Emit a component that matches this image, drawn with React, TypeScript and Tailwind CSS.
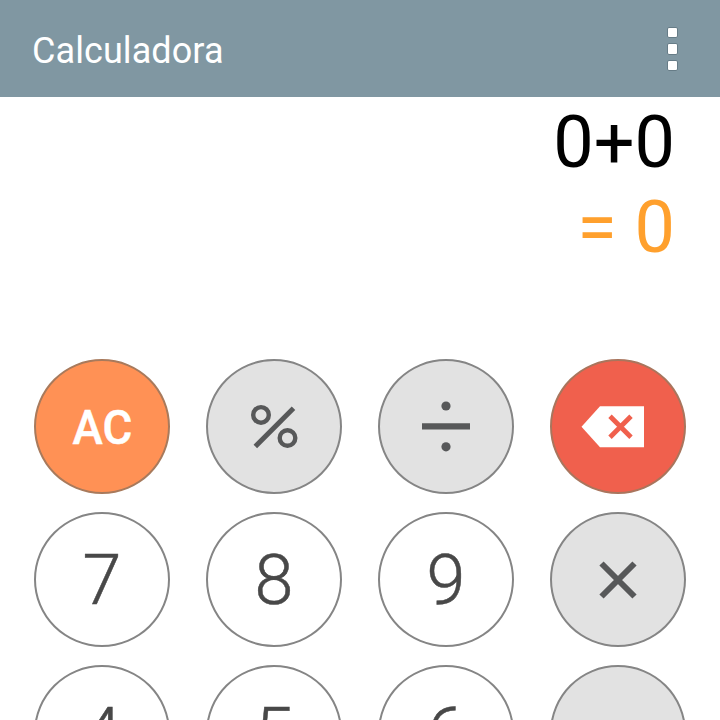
import type { ReactNode } from 'react';

type Tone = 'clear' | 'erase' | 'operator' | 'digit';

const tones: Record<Tone, string> = {
  clear: 'bg-[#ff9155] border-[#a87a5c] text-white',
  erase: 'bg-[#f0604d] border-[#a9755d] text-white',
  operator: 'bg-[#e2e2e2] border-[#858585] text-[#575859]',
  digit: 'bg-white border-[#858585] text-[#484848]',
};

function Key({ tone, label, children }: { tone: Tone; label: string; children?: ReactNode }) {
  return (
    <button
      aria-label={label}
      className={`flex h-[135px] w-[136px] items-center justify-center rounded-[50%] border-2 ${tones[tone]}`}
    >
      {children}
    </button>
  );
}

function Digit({ value }: { value: string }) {
  return (
    <Key tone="digit" label={value}>
      <span className="text-[70px] leading-[70px] font-light [-webkit-text-stroke:0.5px_#484848]">{value}</span>
    </Key>
  );
}

function PercentIcon() {
  return (
    <svg width="52" height="52" viewBox="0 0 52 52" fill="none" stroke="currentColor">
      <circle cx="13" cy="13.9" r="7.8" strokeWidth="4.4" />
      <circle cx="39.5" cy="37" r="7.8" strokeWidth="4.4" />
      <path d="M7.3 45.4 45.5 7.2" strokeWidth="5" />
    </svg>
  );
}

function DivideIcon() {
  return (
    <svg width="52" height="52" viewBox="0 0 52 52" fill="currentColor">
      <circle cx="26" cy="5" r="4.6" />
      <path d="M2 22.2h48v6.3H2z" />
      <circle cx="26" cy="45.8" r="4.6" />
    </svg>
  );
}

function EraseIcon() {
  return (
    <svg className="-ml-2.5" width="64" height="44" viewBox="0 0 64 44">
      <path d="M.5 21.8 19 1.3h44v41H19z" fill="currentColor" />
      <path d="m29 11.2 21 21m0-21-21 21" fill="none" stroke="#f0604d" strokeWidth="4.8" />
    </svg>
  );
}

function TimesIcon() {
  return (
    <svg width="40" height="40" viewBox="0 0 40 40" fill="none" stroke="currentColor">
      <path d="m3.5 3.5 33 33m0-33-33 33" strokeWidth="6" />
    </svg>
  );
}

export default function App() {
  return (
    <div className="flex h-[720px] w-[720px] flex-col overflow-hidden bg-white font-['Roboto',sans-serif]">
      <header className="flex h-[97px] shrink-0 items-center justify-between bg-[#8097a2] pr-[42px] pl-8">
        <h1 className="pt-[5px] text-[36px] leading-[42px] tracking-[0.08px] text-white">Calculadora</h1>
        <button aria-label="Menu" className="flex flex-col gap-[5px] pt-[1px]">
          <span className="size-[11.5px] rounded-[2px] border border-[#667c87] bg-white" />
          <span className="size-[11.5px] rounded-[2px] border border-[#667c87] bg-white" />
          <span className="size-[11.5px] rounded-[2px] border border-[#667c87] bg-white" />
        </button>
      </header>
      <section className="flex h-[262px] shrink-0 flex-col items-end pt-[3px] pr-[45px] text-[72px] leading-[85px]">
        <div className="text-black">0+0</div>
        <div className="text-[#ffa02d]">= 0</div>
      </section>
      <main className="grid shrink-0 grid-cols-[repeat(4,136px)] gap-x-9 gap-y-[18px] pl-[34px]">
        <Key tone="clear" label="AC">
          <span className="scale-x-[0.95] pt-[3px] text-[48px] leading-[56px] font-medium [-webkit-text-stroke:0.5px_white]">
            AC
          </span>
        </Key>
        <Key tone="operator" label="%">
          <PercentIcon />
        </Key>
        <Key tone="operator" label="÷">
          <DivideIcon />
        </Key>
        <Key tone="erase" label="Borrar">
          <EraseIcon />
        </Key>
        <Digit value="7" />
        <Digit value="8" />
        <Digit value="9" />
        <Key tone="operator" label="×">
          <TimesIcon />
        </Key>
        <Digit value="4" />
        <Digit value="5" />
        <Digit value="6" />
        <Key tone="operator" label="−" />
      </main>
    </div>
  );
}
